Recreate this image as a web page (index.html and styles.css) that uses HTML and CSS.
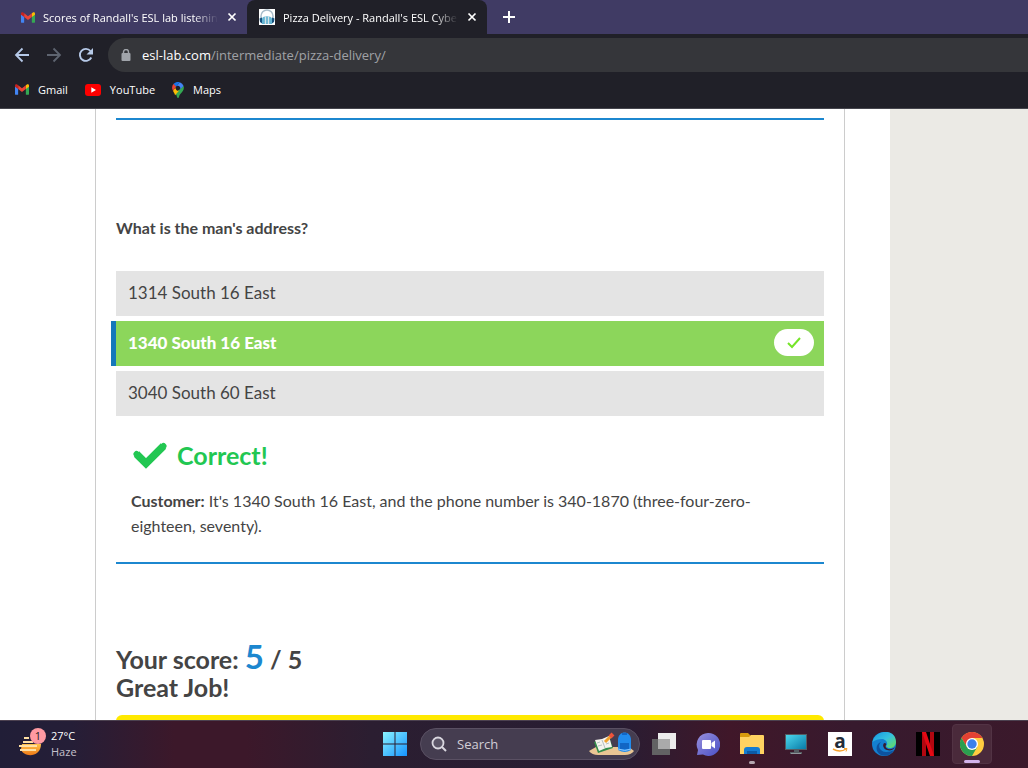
FILE: index.html
```html
<!DOCTYPE html>
<html lang="en">
<head>
<meta charset="utf-8">
<title>Pizza Delivery - Randall's ESL Cyber Listening Lab</title>
<link rel="stylesheet" href="styles.css">
</head>
<body>
<svg class="defs" aria-hidden="true">
  <symbol id="gmail" viewBox="0 0 16 12">
    <path fill="#4285f4" d="M0 2v9a1 1 0 0 0 1 1h2.6V4.5z"/>
    <path fill="#34a853" d="M12.4 12H15a1 1 0 0 0 1-1V2l-3.600 2.500z"/>
    <path fill="#fbbc04" d="M12.400 1.200v4.300L16 2.800V1.500C16 0 14.300-.4 13.200.500z"/>
    <path fill="#ea4335" d="M3.600 5.500V1.200L8 4.500l4.400-3.300v4.300L8 8.800z"/>
    <path fill="#c5221f" d="M0 1.500v1.300l3.600 2.700V1.200L2.800.5C1.700-.4 0 0 0 1.500z"/>
  </symbol>
</svg>

<header class="browser">
  <div class="tabs">
    <div class="tab">
      <svg class="icon-14"><use href="#gmail"/></svg>
      <span class="tab-title">Scores of Randall's ESL lab listening</span>
      <button class="plain" aria-label="Close tab"><svg width="10" height="10" viewBox="0 0 10 10"><path d="M1.500 1.500l7 7m0-7l-7 7" stroke="#fff" stroke-width="1.700"/></svg></button>
    </div>
    <div class="tab tab-active">
      <svg width="16" height="16" viewBox="0 0 16 16"><path fill="#fff" d="M0 0h16v16H0z"/><path d="M2 10V7a6 6 0 0 1 12 0v3" fill="none" stroke="#a9bdca" stroke-width="1.500"/><path fill="#17527f" d="M.5 9.500L3 8.500v6L1 13zm15 0L13 8.500v6l2-1.500z"/><path fill="#65b5d3" d="M3 9.500C4 6.500 12 6.500 13 9.500V15H3z"/><path d="M6.500 7.500V15M9.500 7.500V15" stroke="#d8e4e8" stroke-width="1.300"/></svg>
      <span class="tab-title">Pizza Delivery - Randall's ESL Cyber</span>
      <button class="plain" aria-label="Close tab"><svg width="10" height="10" viewBox="0 0 10 10"><path d="M1.500 1.500l7 7m0-7l-7 7" stroke="#fff" stroke-width="1.700"/></svg></button>
    </div>
    <button class="plain new-tab" aria-label="New tab"><svg width="12" height="12" viewBox="0 0 12 12"><path d="M6 0v12M0 6h12" stroke="#fff" stroke-width="2"/></svg></button>
  </div>
  <div class="toolbar">
    <button class="plain" aria-label="Back"><svg width="16" height="16" viewBox="0 0 16 16"><path d="M15 8H2m6.500-6.500L2 8l6.500 6.500" fill="none" stroke="#b6c9e8" stroke-width="1.800"/></svg></button>
    <button class="plain" aria-label="Forward"><svg width="16" height="16" viewBox="0 0 16 16"><path d="M1 8h13M7.500 1.500L14 8l-6.500 6.500" fill="none" stroke="#5e6470" stroke-width="1.800"/></svg></button>
    <button class="plain" aria-label="Reload"><svg width="16" height="16" viewBox="0 0 16 16"><path d="M13.300 10.500A6 6 0 1 1 12.500 4" fill="none" stroke="#b6c9e8" stroke-width="1.900"/><path fill="#b6c9e8" d="M15 1v6.500H8.500z"/></svg></button>
    <div class="address">
      <svg width="10" height="12" viewBox="0 0 10 12"><rect x="0.500" y="4" width="9" height="8" rx="1" fill="#a0a4aa"/><path d="M2.500 5V3a2.500 2.500 0 0 1 5 0v2" fill="none" stroke="#a0a4aa" stroke-width="1.400"/></svg>
      <a class="url" href="#"><span class="host">esl-lab.com</span>/intermediate/pizza-delivery/</a>
    </div>
  </div>
  <nav class="bookmarks">
    <a href="#"><svg class="icon-14"><use href="#gmail"/></svg>Gmail</a>
    <a href="#"><svg width="16" height="12" viewBox="0 0 16 12"><rect width="16" height="12" rx="3" fill="#f00"/><path fill="#fff" d="M6.300 3.200v5.600L11 6z"/></svg>YouTube</a>
    <a href="#"><svg width="12" height="16" viewBox="0 0 12 16"><path fill="#34a853" d="M11.600 4A6 6 0 0 1 10.800 9C9 11.500 7.400 12.500 7 15q-.3 1-1 1t-1-1c-.3-1.600-1-2.600-2-3.700z"/><path fill="#fbbc04" d="M1 8.700L4 4.800a2.400 2.400 0 0 0 4 2.800l-4.900 5.700C2.500 11 1.500 10 1 8.700z"/><path fill="#4285f4" d="M7.800.3A6 6 0 0 1 11.600 4L8 7.600a2.400 2.400 0 0 0-3.700-3z"/><path fill="#1a73e8" d="M1.400 2.100A6 6 0 0 1 7.800.3L4 4.800z"/><path fill="#ea4335" d="M1.400 2.100L4.100 4.500 1 8.700A6 6 0 0 1 1.400 2.100z"/><circle cx="6" cy="6" r="1.800" fill="#202028"/></svg>Maps</a>
  </nav>
</header>

<div class="viewport">
  <main class="site">
    <article class="quiz">
      <section class="question">
        <h2 class="prompt">What is the man's address?</h2>
        <div class="answers">
          <button class="answer">1314 South 16 East</button>
          <button class="answer answer-right">1340 South 16 East
            <span class="mark"><svg width="14" height="12" viewBox="0 0 14 12"><path d="M1 6l4 4 8-9" fill="none" stroke="#75e529" stroke-width="2"/></svg></span>
          </button>
          <button class="answer">3040 South 60 East</button>
        </div>
        <div class="feedback">
          <h3 class="verdict"><svg width="36" height="28" viewBox="0 0 36 28"><path d="M4.500 13l9.500 9.500L31.500 5" fill="none" stroke="#22c752" stroke-width="7.500"/><path d="M4.500 13l9.500 9.500L31.500 5" fill="none" stroke="#22c752" stroke-width="6" stroke-linecap="round"/></svg>Correct!</h3>
          <p class="explain"><strong>Customer:</strong> It's 1340 South 16 East, and the phone number is 340-1870 (three-four-zero-eighteen, seventy).</p>
        </div>
      </section>
      <section class="result">
        <h2 class="score">Your score: <span class="points">5</span> / 5<br>Great Job!</h2>
        <div class="banner"></div>
      </section>
    </article>
  </main>
  <aside class="margin"></aside>
</div>

<footer class="taskbar">
  <button class="plain weather">
    <svg width="28" height="32" viewBox="0 0 28 32"><defs><linearGradient id="sun" x2="0" y2="1"><stop stop-color="#ffc34b"/><stop offset="1" stop-color="#ef7916"/></linearGradient></defs><path fill="url(#sun)" d="M4 16h19c0 14-18 14-20 5z"/><path d="M6 10h5M5 14h10M1 18h18M2 22h16" stroke="#ffe0a3" stroke-width="1.800"/><circle cx="20" cy="8" r="8" fill="#ff9aa2"/><text class="badge" x="20" y="12" text-anchor="middle">1</text></svg>
    <span class="reading"><span class="temp">27°C</span><span>Haze</span></span>
  </button>
  <div class="apps">
    <button class="plain app" aria-label="Start"><svg width="24" height="24" viewBox="0 0 24 24"><defs><linearGradient id="win" x2="1" y2="1"><stop stop-color="#8af3ff"/><stop offset="1" stop-color="#1593ff"/></linearGradient></defs><path fill="url(#win)" d="M0 0h11.500v11.500H0zM12.500 0H24v11.500H12.500zM0 12.500h11.500V24H0zM12.500 12.500H24V24H12.500z"/></svg></button>
    <label class="search">
      <svg width="16" height="16" viewBox="0 0 16 16"><circle cx="7" cy="7" r="5.500" fill="#5b5567" stroke="#d9d7df" stroke-width="1.800"/><path d="M11 11l4 4" stroke="#d9d7df" stroke-width="2"/></svg>
      <input type="search" placeholder="Search" aria-label="Search">
      <svg width="46" height="26" viewBox="0 0 46 26"><path fill="#e9c694" d="M0 20l7-4h33l5 4q-3 4-9 4H9q-6 0-9-4z"/><path fill="#328d4a" d="M5 11l15-5 4 11-15 5z"/><path fill="#f4f4ee" d="M6 9l7-1 7-3 3 11-6 1-7 3z"/><path d="M13 9l3 8M8 12l3-1m-2 4l4-1m3-4l3-1m-2 4l3-1" stroke="#b4c0c1"/><path d="M16 11l6-6" stroke="#efa22d" stroke-width="3"/><path d="M21 6l3-3" stroke="#ee533b" stroke-width="4"/><path fill="#218bec" d="M29 19V9c0-10 13-10 13 0v10q-6 4-13 0z"/><path fill="#1266c4" d="M31 12h9v6h-9zM33 2h5v2h-5z"/><path d="M29 18q7 3 13 0" fill="none" stroke="#8ec8ff"/></svg>
    </label>
    <button class="plain app" aria-label="Task view"><svg width="24" height="22" viewBox="0 0 24 22"><path fill="#ececec" d="M6 0h18v16H6z"/><path fill="#626263" d="M0 6h18v16H0z"/><path fill="#aaa" d="M6 6h12v10H6z"/></svg></button>
    <button class="plain app" aria-label="Chat"><svg width="24" height="24" viewBox="0 0 24 24"><defs><linearGradient id="chat" x2="1" y2="1"><stop stop-color="#9991dc"/><stop offset="1" stop-color="#494fc6"/></linearGradient></defs><path fill="url(#chat)" d="M12 1a11.500 11.500 0 1 1-5 21.500L1 23l1-5A11.500 11.500 0 0 1 12 1z"/><rect x="6" y="8" width="9" height="9" rx="1" fill="#fff"/><path fill="#fff" d="M15.500 11L19 8.500v8L15.500 14z"/></svg></button>
    <button class="plain app app-open" aria-label="File Explorer"><svg width="24" height="24" viewBox="0 0 24 24"><path fill="#d89a0d" d="M0 2q0-1 1-1h7l3 3v4H0z"/><path fill="#ffd261" d="M0 5h9l2-2h12q1 0 1 1v18H0z"/><path fill="#147cd1" d="M4 22v-4q0-3 3-3h10q3 0 3 3v4z"/><path fill="#0c5aa5" d="M7 19h10v3H7z"/></svg></button>
    <button class="plain app" aria-label="This PC"><svg width="22" height="22" viewBox="0 0 22 22"><defs><linearGradient id="screen" x2="1" y2="1"><stop stop-color="#4bd6ec"/><stop offset="1" stop-color="#087ba7"/></linearGradient></defs><path fill="#555c62" d="M0 1h22v16H0zM9 17h5v2h3v2H5v-2h4z"/><path fill="url(#screen)" d="M1 2h20v14H1z"/><path fill="#8e959a" d="M6 20h10v1H6z"/></svg></button>
    <button class="plain app" aria-label="Amazon"><svg width="24" height="24" viewBox="0 0 24 24"><path fill="#fff" d="M0 0h24v24H0z"/><text class="amazon" x="12" y="16" text-anchor="middle">a</text><path d="M5 17q7 4 13 0" fill="none" stroke="#f6a12b" stroke-width="1.500"/><path d="M16 16.500h3l-1 3" fill="none" stroke="#f6a12b"/></svg></button>
    <button class="plain app" aria-label="Edge"><svg width="24" height="24" viewBox="0 0 24 24"><defs><linearGradient id="edge" x2="1" y2="1"><stop stop-color="#1697e0"/><stop offset="0.500" stop-color="#35c1df"/><stop offset="1" stop-color="#6be052"/></linearGradient></defs><circle cx="12" cy="12" r="12" fill="#1480d0"/><path fill="url(#edge)" d="M.5 10C3-3 24-4 24 10c0 6-8 8-10 4 3-2 0-7-4-7-4 0-7 1-9.500 3z"/><path fill="#0d529f" d="M9 10c-4 4-1 10 5 10 3 0 6-1 8-2-3 5-8 7-13 5C3 20 3 12 9 10z"/><path fill="#371a30" d="M12.500 11c2 0 2 2 1 3 0 4 7 4 9.500 1-1 3-5 4-8 3-4-1-5-6-2.500-7z"/></svg></button>
    <button class="plain app" aria-label="Netflix"><svg width="24" height="24" viewBox="0 0 24 24"><path d="M0 0h24v24H0z"/><path fill="#b20710" d="M6 0h4v24l-4 .5zM14 0h4v24h-4z"/><path fill="#e50914" d="M6 0h4l8 24h-4z"/></svg></button>
    <button class="plain app app-current" aria-label="Chrome"><svg width="24" height="24" viewBox="0 0 24 24"><circle cx="12" cy="12" r="12" fill="#ffcd40"/><path fill="#e34133" d="M1.600 6A12 12 0 0 1 22.400 6H12L7 15z"/><path fill="#2b9e50" d="M1.600 6A12 12 0 0 0 12 24l5.200-9H7z"/><circle cx="12" cy="12" r="6" fill="#fff"/><circle cx="12" cy="12" r="4.700" fill="#3b80eb"/></svg></button>
  </div>
</footer>
</body>
</html>
```
FILE: styles.css
```css
* { box-sizing: border-box; }
body {
  margin: 0;
  height: 100vh;
  display: flex;
  flex-direction: column;
  overflow: hidden;
  background: #fff;
  font-family: "Open Sans", "Noto Sans", sans-serif;
}
svg { flex: none; display: block; }
h2, h3, p { margin: 0; }
a { color: inherit; text-decoration: none; }
.defs { position: absolute; width: 0; height: 0; }
.plain {
  display: flex;
  align-items: center;
  justify-content: center;
  border: 0;
  padding: 0;
  background: none;
  color: inherit;
  font: inherit;
}
.icon-14 { width: 14px; height: 11px; }

.browser {
  flex: none;
  background: #202028;
  border-bottom: 1px solid #45454d;
  color: #fff;
  font-size: 11px;
}
.tabs {
  display: flex;
  height: 34px;
  padding-left: 9px;
  background: #403b64;
}
.tab {
  display: flex;
  align-items: center;
  gap: 8px;
  width: 238px;
  padding: 0 9px 0 12px;
}
.tab-title {
  flex: 1;
  overflow: hidden;
  white-space: nowrap;
  mask-image: linear-gradient(to right, #000 86%, transparent);
}
.tab .plain { width: 12px; }
.tab-active {
  width: 240px;
  background: #202028;
  border-radius: 8px 8px 0 0;
}
.new-tab { width: 44px; }
.toolbar {
  display: flex;
  align-items: center;
  gap: 16px;
  height: 42px;
  padding-left: 14px;
}
.address {
  flex: 1;
  display: flex;
  align-items: center;
  gap: 11px;
  height: 34px;
  margin-left: -2px;
  padding-left: 13px;
  background: #35363a;
  border-radius: 17px 0 0 17px;
}
.url { color: #a0a2a6; font-size: 13px; }
.host { color: #fff; }
.bookmarks {
  display: flex;
  align-items: center;
  gap: 17px;
  height: 32px;
  padding: 0 15px 5px;
}
.bookmarks a { display: flex; align-items: center; gap: 9px; }

.viewport {
  flex: 1;
  min-height: 0;
  display: grid;
  grid-template-columns: 1fr 138px;
  overflow: hidden;
  font-family: Lato, sans-serif;
  color: #444;
}
.site { padding: 0 45px 0 95px; }
.margin { background: #ebeae5; }
.quiz {
  padding: 9px 20px 0;
  border: solid #ccc;
  border-width: 0 1px;
}
.question {
  border: solid #1c87cf;
  border-width: 2px 0;
  padding: 95px 0 24px;
}
.prompt { font-size: 16px; line-height: 25px; }
.answers {
  display: flex;
  flex-direction: column;
  gap: 5px;
  margin-top: 31px;
}
.answer {
  display: flex;
  align-items: center;
  justify-content: space-between;
  height: 45px;
  padding: 0 10px 2px 12px;
  border: 0;
  background: #e4e4e4;
  color: #444;
  font: 17px Lato, sans-serif;
}
.answer-right {
  margin-left: -5px;
  border-left: 5px solid #1478ba;
  background: #8cd65b;
  color: #fff;
  font-weight: 900;
}
.mark {
  display: flex;
  align-items: center;
  justify-content: center;
  width: 40px;
  height: 27px;
  border-radius: 14px;
  background: #fff;
}
.feedback { padding: 23px 15px 0; }
.verdict {
  display: flex;
  align-items: center;
  gap: 9px;
  padding-left: 1px;
  color: #22c752;
  font-size: 25px;
  line-height: 32px;
}
.explain { margin-top: 17px; font-size: 16px; line-height: 25px; }
.result { padding-top: 81px; }
.score { font-size: 25px; line-height: 28px; }
.points { color: #1c87cf; font-size: 33px; line-height: 0; }
.banner {
  height: 60px;
  margin-top: 14px;
  border-radius: 6px;
  background: #ffe900;
}

.taskbar {
  flex: none;
  display: flex;
  align-items: center;
  height: 48px;
  padding: 0 34px 0 18px;
  box-shadow: inset 0 1px #4c4150;
  background: linear-gradient(90deg, #211e37 0%, #251e37 7%, #3c182a 17%, #3c182a 24%, #2b1e31 36%, #281d33 60%, #401729 71%, #371a2e 83%, #3b192b 100%);
  color: #fff;
  font-size: 11px;
}
.weather { gap: 5px; }
.reading { display: grid; text-align: left; line-height: 16px; color: #c5c1cc; }
.temp { color: #fff; }
.badge { font-size: 11px; fill: #222; }
.apps { display: flex; align-items: center; margin-left: auto; }
.app { width: 40px; height: 40px; margin: 0 2px; border-radius: 4px; position: relative; }
.search {
  display: flex;
  align-items: center;
  width: 220px;
  height: 32px;
  margin: 0 2px 0 3px;
  padding: 0 4px 0 10px;
  gap: 10px;
  border: 1px solid #5a5063;
  border-radius: 16px;
  background: #453d50;
}
.search input {
  flex: 1;
  min-width: 0;
  padding: 0;
  border: 0;
  outline: 0;
  background: none;
  color: #d2ced6;
  font: 13px "Open Sans", sans-serif;
}
.search input::placeholder { color: #d2ced6; }
.app-open::after, .app-current::after {
  content: "";
  position: absolute;
  bottom: 0;
  width: 6px;
  height: 3px;
  border-radius: 2px;
  background: #b5a7b0;
}
.app-current { background: #4a2a3b; border: 1px solid #523344; }
.app-current::after { width: 16px; background: #d3b4ec; }
.amazon { font: bold 19px "Open Sans", sans-serif; fill: #222c38; }
```
